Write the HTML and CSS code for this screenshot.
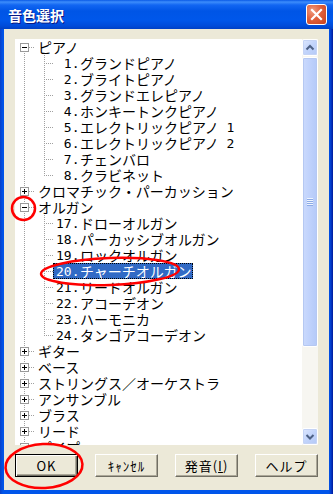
FILE: index.html
```html
<!DOCTYPE html>
<html lang="ja">
<head>
    <meta charset="UTF-8">
    <meta name="viewport" content="width=device-width, initial-scale=1.0">
    <title>音色選択</title>
    <link rel="stylesheet" href="styles.css">
</head>
<body>

<div class="window">
    <div class="titlebar">
        <span class="title">音色選択</span>
        <span class="close">
            <svg width="21" height="21" viewBox="0 0 21 21"><path d="M6 6 L15 15 M15 6 L6 15" stroke="#fff" stroke-width="2.2" stroke-linecap="square"/></svg>
        </span>
    </div>

    <div class="client">
        <div class="tree">
            <div class="nodes">
                <div class="row"><span class="col root-first"><span class="box minus"></span></span><span class="label">ピアノ</span></div>
                <div class="row"><span class="col pass"></span><span class="col2 branch"></span><span class="label"><span class="num"> 1.</span>グランドピアノ</span></div>
                <div class="row"><span class="col pass"></span><span class="col2 branch"></span><span class="label"><span class="num"> 2.</span>ブライトピアノ</span></div>
                <div class="row"><span class="col pass"></span><span class="col2 branch"></span><span class="label"><span class="num"> 3.</span>グランドエレピアノ</span></div>
                <div class="row"><span class="col pass"></span><span class="col2 branch"></span><span class="label"><span class="num"> 4.</span>ホンキートンクピアノ</span></div>
                <div class="row"><span class="col pass"></span><span class="col2 branch"></span><span class="label"><span class="num"> 5.</span>エレクトリックピアノ<span class="tail"> 1</span></span></div>
                <div class="row"><span class="col pass"></span><span class="col2 branch"></span><span class="label"><span class="num"> 6.</span>エレクトリックピアノ<span class="tail"> 2</span></span></div>
                <div class="row"><span class="col pass"></span><span class="col2 branch"></span><span class="label"><span class="num"> 7.</span>チェンバロ</span></div>
                <div class="row"><span class="col pass"></span><span class="col2 branch-last"></span><span class="label"><span class="num"> 8.</span>クラビネット</span></div>
                <div class="row"><span class="col root"><span class="box plus"></span></span><span class="label">クロマチック・パーカッション</span></div>
                <div class="row"><span class="col root"><span class="box minus"></span></span><span class="label">オルガン</span></div>
                <div class="row"><span class="col pass"></span><span class="col2 branch"></span><span class="label"><span class="num">17.</span>ドローオルガン</span></div>
                <div class="row"><span class="col pass"></span><span class="col2 branch"></span><span class="label"><span class="num">18.</span>パーカッシブオルガン</span></div>
                <div class="row"><span class="col pass"></span><span class="col2 branch"></span><span class="label"><span class="num">19.</span>ロックオルガン</span></div>
                <div class="row"><span class="col pass"></span><span class="col2 branch"></span><span class="label sel"><span class="num">20.</span>チャーチオルガン</span></div>
                <div class="row"><span class="col pass"></span><span class="col2 branch"></span><span class="label"><span class="num">21.</span>リードオルガン</span></div>
                <div class="row"><span class="col pass"></span><span class="col2 branch"></span><span class="label"><span class="num">22.</span>アコーデオン</span></div>
                <div class="row"><span class="col pass"></span><span class="col2 branch"></span><span class="label"><span class="num">23.</span>ハーモニカ</span></div>
                <div class="row"><span class="col pass"></span><span class="col2 branch-last"></span><span class="label"><span class="num">24.</span>タンゴアコーデオン</span></div>
                <div class="row"><span class="col root"><span class="box plus"></span></span><span class="label">ギター</span></div>
                <div class="row"><span class="col root"><span class="box plus"></span></span><span class="label">ベース</span></div>
                <div class="row"><span class="col root"><span class="box plus"></span></span><span class="label">ストリングス／オーケストラ</span></div>
                <div class="row"><span class="col root"><span class="box plus"></span></span><span class="label">アンサンブル</span></div>
                <div class="row"><span class="col root"><span class="box plus"></span></span><span class="label">ブラス</span></div>
                <div class="row"><span class="col root"><span class="box plus"></span></span><span class="label">リード</span></div>
                <div class="row"><span class="col root"><span class="box plus"></span></span><span class="label">パイプ</span></div>
                <div class="row"><span class="col root"><span class="box plus"></span></span><span class="label">シンセリード</span></div>
            </div>
            <div class="scrollbar">
                <span class="sb-btn">
                    <svg width="14" height="15" viewBox="0 0 14 15"><polyline points="3.5,9.5 7,6 10.5,9.5" fill="none" stroke="#4D6185" stroke-width="2"/></svg>
                </span>
                <span class="thumb"><span class="grip"></span></span>
                <span class="track"></span>
                <span class="sb-btn">
                    <svg width="14" height="15" viewBox="0 0 14 15"><polyline points="3.5,6 7,9.5 10.5,6" fill="none" stroke="#4D6185" stroke-width="2"/></svg>
                </span>
            </div>
        </div>

        <div class="buttons">
            <button class="btn default">OK</button>
            <button class="btn">ｷｬﾝｾﾙ</button>
            <button class="btn">発音(<span class="u">I</span>)</button>
            <button class="btn">ヘルプ</button>
        </div>
    </div>

    <!-- red marks drawn over the screenshot -->
    <svg class="marks" width="333" height="494" viewBox="0 0 333 494">
        <ellipse cx="23.5" cy="208.5" rx="11.5" ry="11.5" />
        <ellipse cx="110" cy="271.5" rx="69" ry="13.5" transform="rotate(-2 110 271.5)" />
        <ellipse cx="44" cy="466" rx="38.5" ry="22" transform="rotate(-3 44 466)" />
    </svg>
</div>

</body>
</html>
```

FILE: styles.css
```css
body {
    margin: 0;
    background-color: #fff;
}
.window {
    position: relative;
    width: 333px;
    height: 494px;
    display: flex;
    flex-direction: column;
    background: linear-gradient(to right, #0840C8 0, #0055EA 3px, #0055EA 329px, #0339C8 331px, #001A9A 333px);
}
.titlebar {
    height: 29px;
    display: flex;
    align-items: center;
    justify-content: space-between;
    padding: 0 6px 0 8px;
    background: linear-gradient(to bottom, #0A5AE6 0, #3D8DFB 2px, #1266F2 5px, #0055E6 11px, #0057EA 20px, #004BD9 26px, #0040C4 29px);
}
.title {
    color: #fff;
    font: bold 14px "Noto Sans CJK JP", sans-serif;
    text-shadow: 1px 1px 0 #0A1883;
}
.close {
    width: 21px;
    height: 21px;
    box-sizing: border-box;
    border: 1px solid #fff;
    border-radius: 3px;
    background: radial-gradient(circle at 30% 30%, #F09C80 0, #E0603C 45%, #C8401C 100%);
}
.close svg {
    display: block;
    margin: -1px;
}
.client {
    flex: 1;
    margin: 0 4px 4px;
    padding: 10px 11px 0;
    background-color: #ECE9D8;
    display: flex;
    flex-direction: column;
}

/* tree view */
.tree {
    height: 406px;
    display: flex;
    background-color: #fff;
}
.nodes {
    flex: 1;
    overflow: hidden;
    --dv: repeating-linear-gradient(to bottom, #A0A0A0 0 1px, transparent 1px 2px);
    --dh: repeating-linear-gradient(to right, #A0A0A0 0 1px, transparent 1px 2px);
}
.row {
    display: flex;
    height: 16px;
}
.col, .col2 {
    flex-shrink: 0;
    height: 16px;
    display: flex;
    align-items: center;
    background-repeat: no-repeat;
}
.col {
    width: 20px;
}
.col2 {
    width: 18px;
}
.root-first {
    background-image: var(--dv), var(--dh);
    background-size: 1px 8px, 6px 1px;
    background-position: 9px 8px, 14px 8px;
}
.root {
    background-image: var(--dv), var(--dh);
    background-size: 1px 16px, 6px 1px;
    background-position: 9px 0, 14px 8px;
}
.pass {
    background-image: var(--dv);
    background-size: 1px 16px;
    background-position: 9px 0;
}
.branch {
    background-image: var(--dv), var(--dh);
    background-size: 1px 16px, 9px 1px;
    background-position: 9px 0, 9px 8px;
}
.branch-last {
    background-image: var(--dv), var(--dh);
    background-size: 1px 9px, 9px 1px;
    background-position: 9px 0, 9px 8px;
}
.box {
    width: 9px;
    height: 9px;
    margin-left: 5px;
    box-sizing: border-box;
    border: 1px solid #9A9A9A;
    background-color: #fff;
    background-repeat: no-repeat;
}
.minus {
    background-image: linear-gradient(#000, #000);
    background-size: 5px 1px;
    background-position: 1px 3px;
}
.plus {
    background-image: linear-gradient(#000, #000), linear-gradient(#000, #000);
    background-size: 5px 1px, 1px 5px;
    background-position: 1px 3px, 3px 1px;
}
.label {
    height: 16px;
    line-height: 16px;
    padding: 0 2px 0 3px;
    display: flex;
    align-items: center;
    white-space: nowrap;
    font: 14px "Noto Sans CJK JP", sans-serif;
    color: #000;
}
.num, .tail {
    font: 13px "DejaVu Sans Mono", monospace;
    white-space: pre;
}
.num {
    width: 24px;
    flex-shrink: 0;
}
.sel {
    background-color: #316AC5;
    color: #fff;
    outline: 1px dotted #000;
    outline-offset: -1px;
}

/* scrollbar */
.scrollbar {
    width: 16px;
    display: flex;
    flex-direction: column;
    background-color: #F7F6F1;
}
.sb-btn {
    height: 17px;
    box-sizing: border-box;
    border: 1px solid #fff;
    border-radius: 2px;
    background: linear-gradient(135deg, #DDE7FE 0, #C2D4FB 50%, #B4C9F7 100%);
    box-shadow: 0 0 0 1px #C4D3F5 inset;
}
.sb-btn svg {
    display: block;
}
.thumb {
    height: 290px;
    margin-top: 1px;
    box-sizing: border-box;
    border: 1px solid #fff;
    border-radius: 2px;
    background: linear-gradient(to right, #CBDAFD 0, #C1D3FC 40%, #B4C9F8 100%);
    box-shadow: 0 0 0 1px #B5C8F2 inset;
    display: flex;
    align-items: center;
    justify-content: center;
}
.grip {
    width: 6px;
    height: 8px;
    background: repeating-linear-gradient(to bottom, #EEF4FE 0 1px, #8CAAE6 1px 2px);
}
.track {
    flex: 1;
}

/* dialog buttons */
.buttons {
    margin-top: 9px;
    display: flex;
    justify-content: space-between;
}
.btn {
    width: 63px;
    height: 23px;
    padding: 0;
    box-sizing: border-box;
    background-color: #ECE9D8;
    border: 1px solid;
    border-color: #fff #716F64 #716F64 #fff;
    box-shadow: inset -1px -1px 0 #ACA899;
    font: 13px "Noto Sans CJK JP", sans-serif;
    letter-spacing: 1px;
    color: #000;
    display: flex;
    align-items: center;
    justify-content: center;
}
.btn.default {
    border-color: #000;
    box-shadow: inset 1px 1px 0 #fff, inset -1px -1px 0 #716F64, inset -2px -2px 0 #ACA899;
}
.u {
    text-decoration: underline;
}

/* annotation marks */
.marks {
    position: absolute;
    top: 0;
    left: 0;
    pointer-events: none;
}
.marks ellipse {
    fill: none;
    stroke: #F00;
    stroke-width: 2.5;
}
```
